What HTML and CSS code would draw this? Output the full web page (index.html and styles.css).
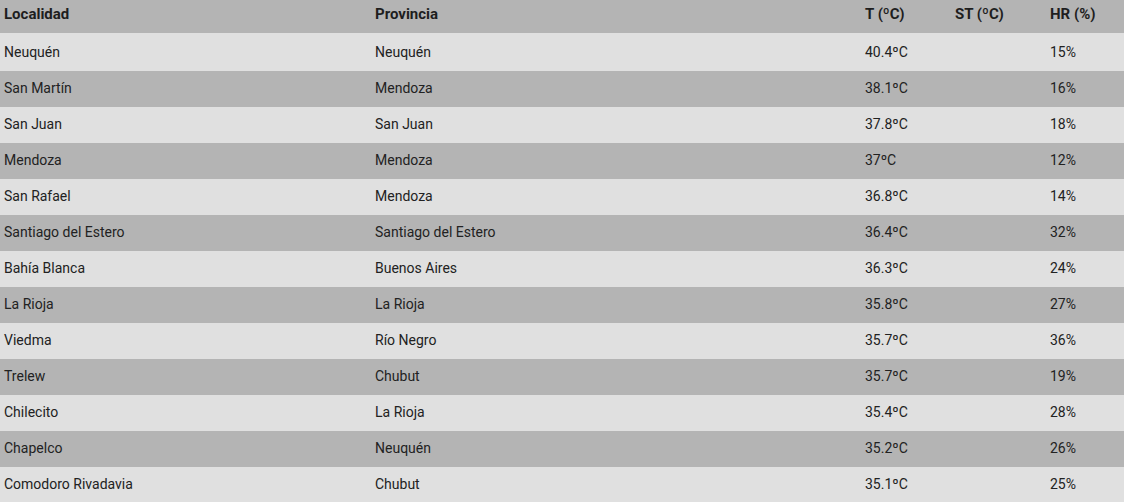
FILE: index.html
```html
<!DOCTYPE html>
<html lang="es">
<head>
<meta charset="utf-8">
<title>Temperaturas</title>
<link rel="stylesheet" href="styles.css">
</head>
<body>
<table class="tabla">
  <colgroup>
    <col class="c-loc"><col class="c-prov"><col class="c-t"><col class="c-st"><col class="c-hr">
  </colgroup>
  <thead>
    <tr><th>Localidad</th><th>Provincia</th><th>T (ºC)</th><th>ST (ºC)</th><th>HR (%)</th></tr>
  </thead>
  <tbody>
    <tr class="first"><td>Neuquén</td><td>Neuquén</td><td>40.4ºC</td><td></td><td>15%</td></tr>
    <tr><td>San Martín</td><td>Mendoza</td><td>38.1ºC</td><td></td><td>16%</td></tr>
    <tr><td>San Juan</td><td>San Juan</td><td>37.8ºC</td><td></td><td>18%</td></tr>
    <tr><td>Mendoza</td><td>Mendoza</td><td>37ºC</td><td></td><td>12%</td></tr>
    <tr><td>San Rafael</td><td>Mendoza</td><td>36.8ºC</td><td></td><td>14%</td></tr>
    <tr><td>Santiago del Estero</td><td>Santiago del Estero</td><td>36.4ºC</td><td></td><td>32%</td></tr>
    <tr><td>Bahía Blanca</td><td>Buenos Aires</td><td>36.3ºC</td><td></td><td>24%</td></tr>
    <tr><td>La Rioja</td><td>La Rioja</td><td>35.8ºC</td><td></td><td>27%</td></tr>
    <tr><td>Viedma</td><td>Río Negro</td><td>35.7ºC</td><td></td><td>36%</td></tr>
    <tr><td>Trelew</td><td>Chubut</td><td>35.7ºC</td><td></td><td>19%</td></tr>
    <tr><td>Chilecito</td><td>La Rioja</td><td>35.4ºC</td><td></td><td>28%</td></tr>
    <tr><td>Chapelco</td><td>Neuquén</td><td>35.2ºC</td><td></td><td>26%</td></tr>
    <tr><td>Comodoro Rivadavia</td><td>Chubut</td><td>35.1ºC</td><td></td><td>25%</td></tr>
  </tbody>
</table>
</body>
</html>
```
FILE: styles.css
```css
html, body {
  margin: 0;
  padding: 0;
  background: #e0e0e0;
}
body {
  font-family: Roboto, "Liberation Sans", sans-serif;
  font-size: 14px;
  color: #222;
}
.tabla {
  width: 1124px;
  border-collapse: collapse;
  table-layout: fixed;
}
.c-loc { width: 371px; }
.c-prov { width: 490px; }
.c-t { width: 90px; }
.c-st { width: 95px; }
.c-hr { width: 78px; }
.tabla th {
  background: #b4b4b4;
  font-size: 15px;
  font-weight: 700;
  text-align: left;
  height: 28px;
  padding: 0 4px 5px;
  vertical-align: middle;
  color: #1e1e1e;
}
.tabla td {
  height: 34px;
  padding: 0 4px 2px;
  vertical-align: middle;
  text-align: left;
}
.tabla tbody tr.first td {
  height: 38px;
  padding-bottom: 0;
}
.tabla tbody tr:nth-child(odd) td { background: #e0e0e0; }
.tabla tbody tr:nth-child(even) td { background: #b4b4b4; }
```
